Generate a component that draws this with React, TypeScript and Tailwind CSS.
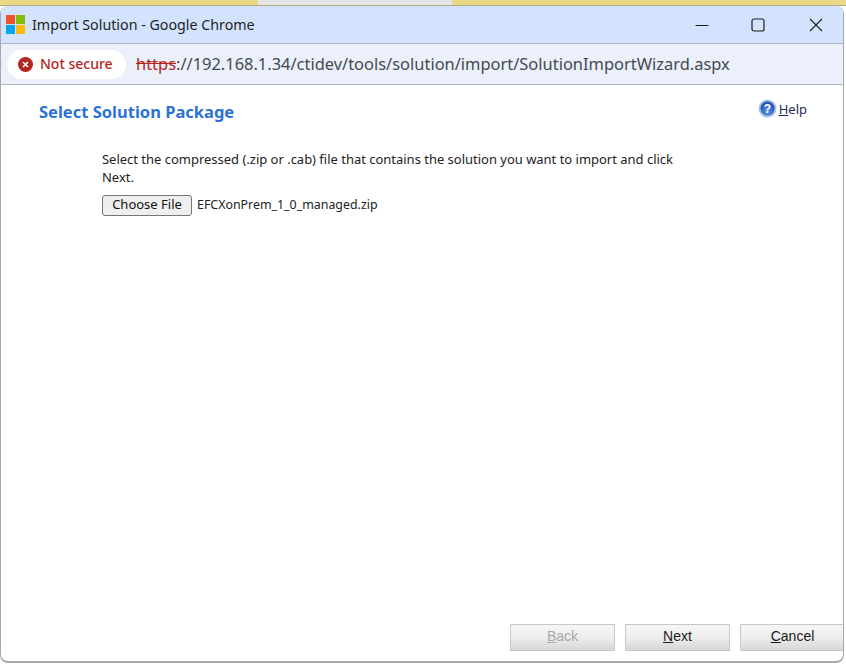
const uiFont = "font-['Noto_Sans','Open_Sans',sans-serif]";

function WindowsLogo() {
  return (
    <svg width="19" height="19" viewBox="0 0 20 20" className="shrink-0">
      <rect x="0" y="0" width="9.5" height="9.5" fill="#f35325" />
      <rect x="10.5" y="0" width="9.5" height="9.5" fill="#81bc06" />
      <rect x="0" y="10.5" width="9.5" height="9.5" fill="#05a6f0" />
      <rect x="10.5" y="10.5" width="9.5" height="9.5" fill="#ffba08" />
    </svg>
  );
}

function HelpIcon() {
  return (
    <svg width="19" height="19" viewBox="0 0 19 19" className="shrink-0">
      <defs>
        <radialGradient id="helpFill" cx="0.5" cy="0.7" r="0.7">
          <stop offset="0" stopColor="#6f9fe6" />
          <stop offset="0.6" stopColor="#2f62c4" />
          <stop offset="1" stopColor="#1f4aa8" />
        </radialGradient>
      </defs>
      <circle cx="9.5" cy="9.5" r="9" fill="#a9c3e4" />
      <circle cx="9.5" cy="9.5" r="7" fill="url(#helpFill)" />
      <text x="9.5" y="14" textAnchor="middle" fontSize="12" fontWeight="700" fill="#fff" fontFamily="Liberation Sans">
        ?
      </text>
    </svg>
  );
}

function FooterButton({ hotkey, rest, disabled = false }: { hotkey: string; rest: string; disabled?: boolean }) {
  return (
    <button
      className={`w-[105px] h-[27px] shrink-0 pb-[2px] border border-[#c3c9ce] bg-gradient-to-b from-[#f6f6f6] via-[#eeeeee] to-[#d6d6d6] text-[14px] font-['Liberation_Sans',sans-serif] ${
        disabled ? "text-[#a9a9a9]" : "text-[#1a1a1a]"
      }`}
    >
      <span className="underline">{hotkey}</span>
      {rest}
    </button>
  );
}

export default function App() {
  return (
    <div className={`w-[846px] h-[664px] relative overflow-hidden bg-white ${uiFont}`}>
      {/* page behind the popup */}
      <div className="flex h-[6px] border-b border-[#b3ab84]">
        <div className="w-[258px] bg-[#e9d987]" />
        <div className="w-[194px] bg-[#e6e6e6]" />
        <div className="flex-1 bg-[#e9d987]" />
      </div>

      <div className="w-[844px] h-[657px] flex flex-col overflow-hidden rounded-[8px] border-l border-r border-b-2 border-[#a8a8a8] bg-white">
        {/* title bar */}
        <div className="h-[38px] shrink-0 flex items-center pl-[5px] bg-[#d3e3fd] border-b border-[#aeb4bd]">
          <WindowsLogo />
          <span className="ml-[7px] pt-[2px] text-[14.25px] leading-none text-[#1f1f1f]">Import Solution - Google Chrome</span>
          <div className="ml-auto flex items-center pr-[20px]">
            <svg width="14" height="14" viewBox="0 0 14 14" className="mr-[42px]">
              <path d="M0.5 7.5h13" stroke="#1f1f1f" strokeWidth="1" />
            </svg>
            <svg width="14" height="14" viewBox="0 0 14 14" className="mr-[44px]">
              <rect x="1" y="1" width="12" height="12" rx="2" fill="none" stroke="#1f1f1f" strokeWidth="1.2" />
            </svg>
            <svg width="14" height="14" viewBox="0 0 14 14">
              <path d="M1 1l12 12M13 1L1 13" stroke="#1f1f1f" strokeWidth="1.1" />
            </svg>
          </div>
        </div>

        {/* address bar */}
        <div className="h-[41px] shrink-0 flex items-center pl-[6px] bg-[#ebf0fa] border-b border-[#aeb4bd]">
          <div className="w-[119px] h-[29px] rounded-full bg-white flex items-center pl-[11px]">
            <svg width="15" height="15" viewBox="0 0 15 15" className="shrink-0">
              <circle cx="7.5" cy="7.5" r="7.5" fill="#b3261e" />
              <path d="M5 5l5 5M10 5l-5 5" stroke="#fff" strokeWidth="1.6" />
            </svg>
            <span className="ml-[7px] text-[14px] leading-none font-medium text-[#b3261e]">Not secure</span>
          </div>
          <span className="ml-[10px] text-[16.45px] leading-none whitespace-nowrap text-[#444a52]">
            <span className="text-[#b3261e] line-through">https</span>
            ://192.168.1.34/ctidev/tools/solution/import/SolutionImportWizard.aspx
          </span>
        </div>

        {/* wizard body */}
        <div className="flex-1 flex flex-col min-h-0">
          <div className="flex items-start justify-between pl-[38px] pr-[36px] pt-[15px]">
            <h1 className="text-[16.5px] leading-[24px] font-bold text-[#2b72d6]">Select Solution Package</h1>
            <a className="flex items-center text-[13px] leading-[18px] text-[#1f2d55] -mt-px">
              <HelpIcon />
              <span className="ml-[2px]">
                <span className="underline">H</span>elp
              </span>
            </a>
          </div>

          <div className="pl-[101px] pt-[26px] w-[690px]">
            <p className="text-[12.97px] leading-[18px] text-[#222]">
              Select the compressed (.zip or .cab) file that contains the solution you want to import and click Next.
            </p>
            <div className="flex items-center mt-[9px]">
              <button className="w-[90px] h-[21px] pb-[2px] rounded-[3px] border border-[#767676] bg-[#efefef] text-[13px] leading-none text-[#111]">
                Choose File
              </button>
              <span className="ml-[5px] text-[12.4px] leading-none text-[#222]">EFCXonPrem_1_0_managed.zip</span>
            </div>
          </div>

          <div className="mt-auto flex justify-end gap-[10px] mr-[-2px] mb-[10px]">
            <FooterButton hotkey="B" rest="ack" disabled />
            <FooterButton hotkey="N" rest="ext" />
            <FooterButton hotkey="C" rest="ancel" />
          </div>
        </div>
      </div>
    </div>
  );
}
